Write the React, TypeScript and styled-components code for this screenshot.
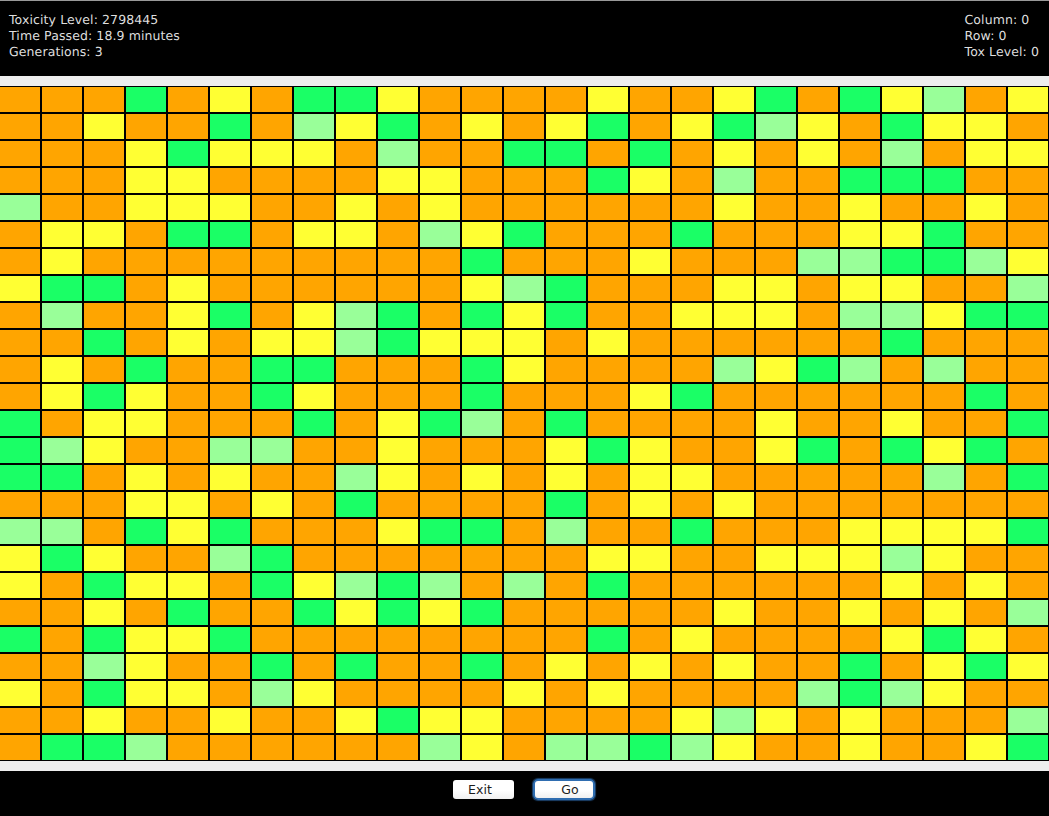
import * as React from 'react';
import styled, { createGlobalStyle } from 'styled-components';

type Tox = 'O' | 'Y' | 'G' | 'L';

const CELL_COLORS: Record<Tox, string> = {
  O: '#ffa500',
  Y: '#ffff33',
  G: '#1aff66',
  L: '#99ff99',
};

const ROWS = [
  'OOOGOYOGGYOOOOYOOYGOGYLOY',
  'OOYOOGOLYGOYOYGOYGLYOGYYO',
  'OOOYGYYYOLOOGGOGOYOYOLOYY',
  'OOOYYOOOOYYOOOGYOLOOGGGOO',
  'LOOYYYOOYOYOOOOOOYOOYOOYO',
  'OYYOGGOYYOLYGOOOGOOOYYGOO',
  'OYOOOOOOOOOGOOOYOOOLLGGLY',
  'YGGOYOOOOOOYLGOOOYYOYYOOL',
  'OLOOYGOYLGOGYGOOYYYOLLYGG',
  'OOGOYOYYLGYYYOYOOOOOOGOOO',
  'OYOGOOGGOOOGYOOOOLYGLOLOO',
  'OYGYOOGYOOOGOOOYGOOOOOOGO',
  'GOYYOOOGOYGLOGOOOOYOOYOOG',
  'GLYOOLLOOYOOOYGYOOYGOGYGO',
  'GGOYOYOOLYOYOYOYYOOOOOLOG',
  'OOOYYOYOGOOOOGOYOYOOOOOOO',
  'LLOGYGOOOYGGOLOOGOOOYYYYG',
  'YGYOOLGOOOOOOOYYOOYYYLYOO',
  'YOGYYOGYLGLOLOGOOOOOOYOYO',
  'OOYOGOOGYGYGOOOOOYOOYOYOL',
  'GOGYYGOOOOOOOOGOYOOOOYGYO',
  'OOLYOOGOGOOGOYOYOYOOGOYGY',
  'YOGYYOLYOOOOYOYOOOOLGLYOO',
  'OOYOOYOOYGYYOOOOYLYOYOOOL',
  'OGGLOOOOOOLYOLLGLYOOYOOYG',
];

const GlobalStyle = createGlobalStyle`
  html, body {
    margin: 0;
    padding: 0;
    background: #eeeeee;
  }
`;

const Window = styled.div`
  width: 1049px;
  height: 816px;
  display: flex;
  flex-direction: column;
  background: #eeeeee;
  overflow: hidden;
  font-family: 'DejaVu Sans', 'Liberation Sans', sans-serif;
  text-rendering: geometricPrecision;
`;

const StatusBar = styled.header`
  box-sizing: border-box;
  height: 76px;
  padding: 11px 10px 0 9px;
  display: flex;
  justify-content: space-between;
  background: #000;
  border-top: 1px solid #999;
  color: #dedede;
  font-size: 12.5px;
  letter-spacing: 0.1px;
  line-height: 16px;
`;

const Stats = styled.div`
  display: flex;
  flex-direction: column;
`;

const Board = styled.main`
  box-sizing: border-box;
  width: 1049px;
  margin: 10px 0;
  padding: 1px 1px 1px 0;
  display: grid;
  grid-template-columns: repeat(25, 40px);
  grid-auto-rows: 25px;
  gap: 2px;
  background: #000;
`;

const Cell = styled.div<{ $tox: Tox }>`
  background: ${(props) => CELL_COLORS[props.$tox]};
`;

const Footer = styled.footer`
  box-sizing: border-box;
  height: 45px;
  padding-bottom: 8px;
  display: flex;
  justify-content: center;
  align-items: center;
  gap: 18px;
  background: #000;
`;

const Button = styled.button`
  box-sizing: border-box;
  width: 61px;
  height: 19px;
  padding: 0 7px 0 0;
  border: 0;
  border-radius: 3px;
  background: linear-gradient(#ffffff 0%, #ffffff 55%, #f0f0f0 100%);
  color: #1c1c1c;
  font-family: inherit;
  font-size: 12.5px;
  letter-spacing: 0.1px;
  line-height: 19px;
`;

// focused default button, the ring fades out into the black bar
const DefaultButton = styled(Button)`
  width: 62px;
  height: 21px;
  margin: 0 1px;
  padding: 0 0 0 12px;
  border: 2px solid #2f6db0;
  border-radius: 5px;
  box-shadow: 0 0 1px 1px rgba(47, 109, 176, 0.6);
  line-height: 17px;
`;

export default function App() {
  return (
    <Window>
      <GlobalStyle />
      <StatusBar>
        <Stats>
          <span>Toxicity Level: 2798445</span>
          <span>Time Passed: 18.9 minutes</span>
          <span>Generations: 3</span>
        </Stats>
        <Stats>
          <span>Column: 0</span>
          <span>Row: 0</span>
          <span>Tox Level: 0</span>
        </Stats>
      </StatusBar>
      <Board>
        {ROWS.flatMap((row, r) =>
          row.split('').map((tox, c) => <Cell key={`${r}-${c}`} $tox={tox as Tox} />),
        )}
      </Board>
      <Footer>
        <Button>Exit</Button>
        <DefaultButton>Go</DefaultButton>
      </Footer>
    </Window>
  );
}
